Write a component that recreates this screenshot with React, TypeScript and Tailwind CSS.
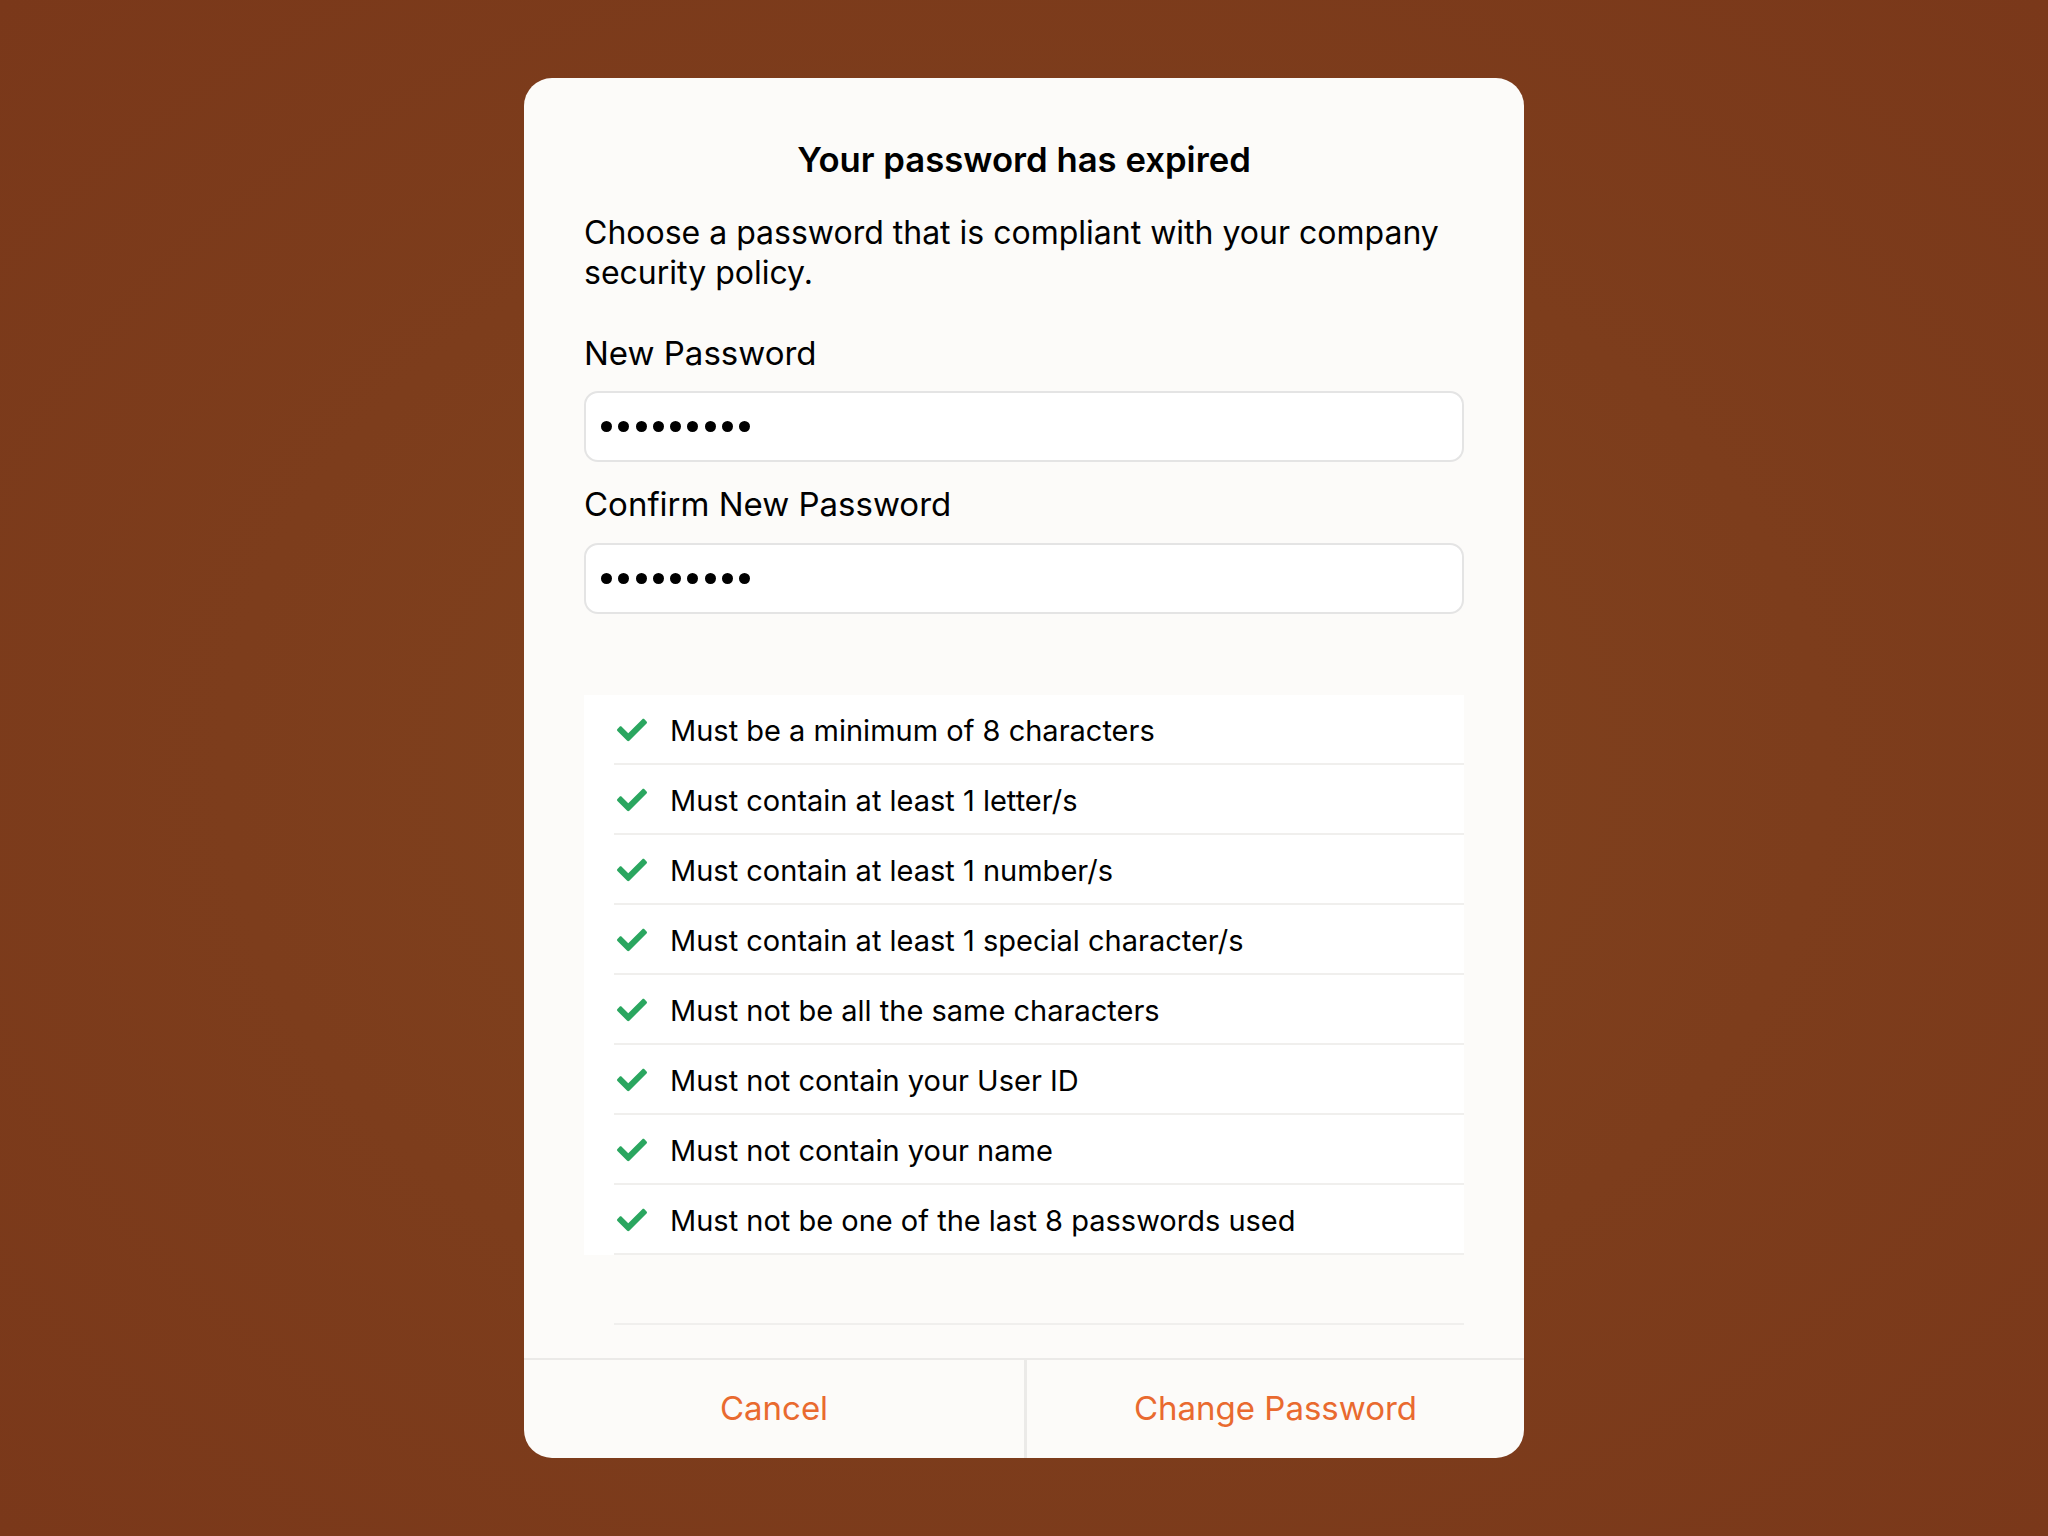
import React from "react";
import { FaCheck } from "react-icons/fa";

const rules = [
  "Must be a minimum of 8 characters",
  "Must contain at least 1 letter/s",
  "Must contain at least 1 number/s",
  "Must contain at least 1 special character/s",
  "Must not be all the same characters",
  "Must not contain your User ID",
  "Must not contain your name",
  "Must not be one of the last 8 passwords used",
];

function Dots() {
  return (
    <div className="flex items-center gap-[6.3px]">
      {Array.from({ length: 9 }).map((_, i) => (
        <span key={i} className="block w-[11px] h-[11px] rounded-full bg-black" />
      ))}
    </div>
  );
}

export default function App() {
  return (
    <div
      className="w-[2048px] h-[1536px] flex justify-center items-start pt-[78px] bg-[radial-gradient(ellipse_at_center,#81441f_0%,#7d3d1c_55%,#7a381a_100%)]"
      style={{ fontFamily: "Inter, 'Noto Sans', sans-serif" }}
    >
      <div className="w-[1000px] h-[1380px] rounded-[28px] bg-[#fcfbf9] flex flex-col overflow-hidden">
        <div className="flex-1 flex flex-col px-[60px] pt-[58px]">
          <h1 className="text-center text-[34.7px] leading-[46px] font-semibold text-black">
            Your password has expired
          </h1>
          <p className="mt-[31px] text-[32px] leading-[40px] text-black">
            Choose a password that is compliant with your company security policy.
          </p>
          <label className="mt-[40px] text-[33px] leading-[40px] text-black">New Password</label>
          <div className="mt-[18px] h-[71px] rounded-[14px] border-2 border-[#e4e4e4] bg-white flex items-center px-[15px]">
            <Dots />
          </div>
          <label className="mt-[22px] text-[33px] leading-[40px] text-black">Confirm New Password</label>
          <div className="mt-[19px] h-[71px] rounded-[14px] border-2 border-[#e4e4e4] bg-white flex items-center px-[15px]">
            <Dots />
          </div>
          <div className="mt-[81px]">
            <div className="bg-white">
              {rules.map((r) => (
                <div key={r} className="h-[70px] ml-[30px] flex items-center border-b-2 border-[#f0efed]">
                  <FaCheck className="shrink-0 text-[#2aa65f] w-[30px] h-[30px] ml-[3px] mt-[1px]" />
                  <span className="ml-[23px] pt-[4px] text-[29px] text-black">{r}</span>
                </div>
              ))}
            </div>
            <div className="h-[70px] ml-[30px] border-b-2 border-[#f0efed]" />
          </div>
        </div>
        <div className="h-[100px] shrink-0 border-t-2 border-[#ebeae8] grid grid-cols-2">
          <button className="flex items-center justify-center text-[33px] text-[#e96a2f]">
            Cancel
          </button>
          <button className="flex items-center justify-center text-[33px] text-[#e96a2f] border-l-[3px] border-[#ebeae8]">
            Change Password
          </button>
        </div>
      </div>
    </div>
  );
}
